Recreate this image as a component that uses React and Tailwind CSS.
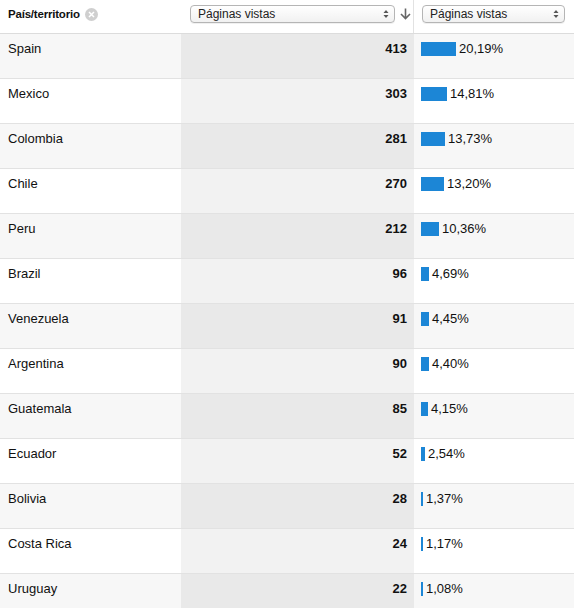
const rows = [
  ['Spain', 413, '20,19%', 20.19],
  ['Mexico', 303, '14,81%', 14.81],
  ['Colombia', 281, '13,73%', 13.73],
  ['Chile', 270, '13,20%', 13.2],
  ['Peru', 212, '10,36%', 10.36],
  ['Brazil', 96, '4,69%', 4.69],
  ['Venezuela', 91, '4,45%', 4.45],
  ['Argentina', 90, '4,40%', 4.4],
  ['Guatemala', 85, '4,15%', 4.15],
  ['Ecuador', 52, '2,54%', 2.54],
  ['Bolivia', 28, '1,37%', 1.37],
  ['Costa Rica', 24, '1,17%', 1.17],
  ['Uruguay', 22, '1,08%', 1.08],
]

function Select({ className }) {
  return (
    <div className={`h-[18px] flex items-center justify-between rounded-[4px] border border-[#b5b5b5] bg-gradient-to-b from-white to-[#f1f1f1] pl-[7px] pr-[5px] shadow-[0_1px_0_rgba(0,0,0,0.06)] ${className}`}>
      <span className="text-[12px] text-[#222] leading-none">Páginas vistas</span>
      <svg width="6" height="10" viewBox="0 0 6 10">
        <path d="M3 1 L5.5 4 H0.5 Z" fill="#555" />
        <path d="M3 9 L5.5 6 H0.5 Z" fill="#555" />
      </svg>
    </div>
  )
}

export default function App() {
  return (
    <div className="w-[574px] h-[608px] overflow-hidden bg-white font-['Liberation_Sans',Arial,sans-serif] text-[13px] text-[#111]">
      <div className="flex h-[34px] border-b border-[#dcdcdc]">
        <div className="w-[181px] flex items-start pt-[7px] pl-[8px] gap-[5px]">
          <span className="font-bold text-[11.5px] tracking-[-0.2px] leading-[14px]">País/territorio</span>
          <span className="mt-[1px] w-[13px] h-[13px] rounded-full bg-[#cfcfcf] flex items-center justify-center">
            <svg width="7" height="7" viewBox="0 0 7 7">
              <path d="M1 1 L6 6 M6 1 L1 6" stroke="white" strokeWidth="1.5" />
            </svg>
          </span>
        </div>
        <div className="w-[233px] flex items-start pt-[5px] border-r border-[#e2e2e2]">
          <Select className="ml-[9px] w-[205px]" />
          <svg className="ml-[5px] mt-[3px]" width="11" height="12" viewBox="0 0 11 12">
            <path d="M5.5 0.5 V10.5 M1 6 L5.5 10.5 L10 6" stroke="#666" strokeWidth="1.6" fill="none" />
          </svg>
        </div>
        <div className="flex-1 pt-[5px]">
          <Select className="ml-[8px] w-[143px]" />
        </div>
      </div>
      {rows.map(([name, n, pct, v], i) => {
        const odd = i % 2 === 0
        return (
          <div key={name} className={`flex h-[45px] border-b border-[#e2e2e2] leading-[16px] ${odd ? 'bg-[#f7f7f7]' : 'bg-white'}`}>
            <div className="w-[181px] pl-[8px] pt-[7px]">{name}</div>
            <div className={`w-[233px] pr-[7px] pt-[7px] text-right font-bold ${odd ? 'bg-[#e9e9e9]' : 'bg-[#f2f2f2]'}`}>{n}</div>
            <div className="flex-1 flex items-start pt-[7px] pl-[7px]">
              <div className="mt-[1px] h-[14px] bg-[#1c86d6] mr-[3px]" style={{ width: Math.max(2, Math.round(v * 1.73)) }} />
              <span>{pct}</span>
            </div>
          </div>
        )
      })}
    </div>
  )
}
